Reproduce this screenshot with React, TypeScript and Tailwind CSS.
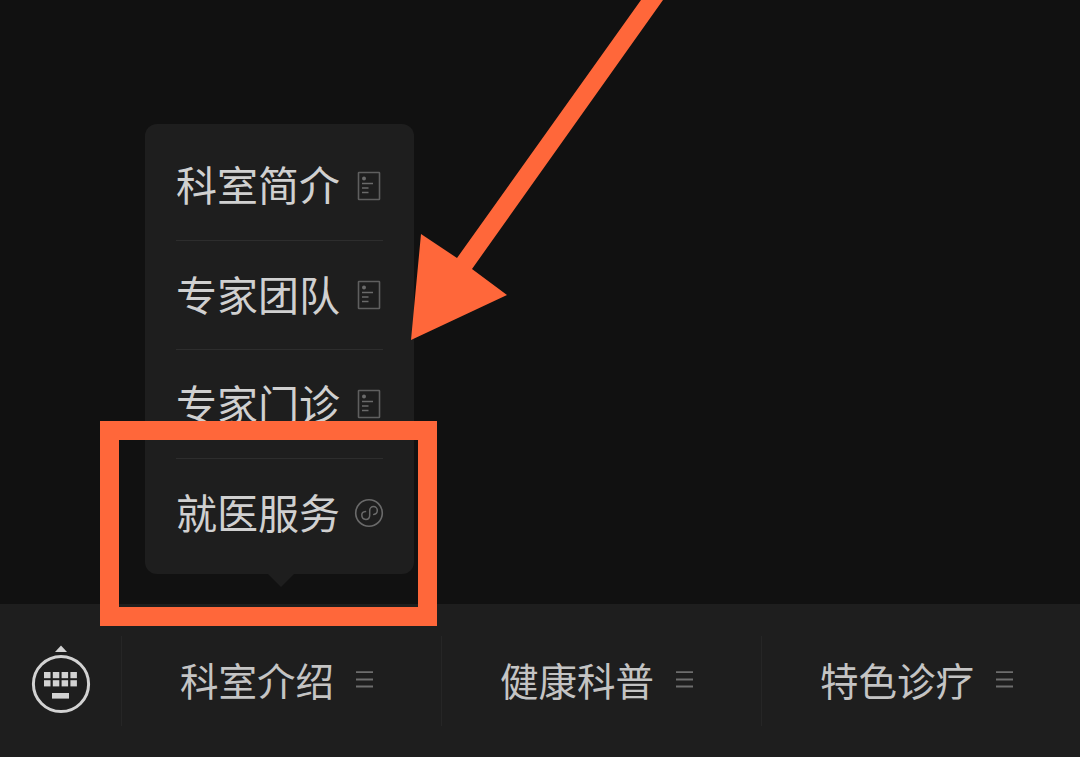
import React from "react";

const FONT = '"Noto Sans CJK SC", "Noto Sans", sans-serif';

function ArticleIcon() {
  return (
    <svg width="24" height="30" viewBox="0 0 24 30" fill="none" className="shrink-0">
      <rect x="1.5" y="1.5" width="21" height="27" stroke="#5f5f5f" strokeWidth="1.6" rx="0.5" />
      <circle cx="7" cy="7.5" r="2" fill="#6a6a6a" />
      <path d="M5 12.5H16M5 17H11.5M5 21.5H11.5" stroke="#6a6a6a" strokeWidth="1.5" />
    </svg>
  );
}

function MiniProgramIcon() {
  return (
    <svg width="30" height="30" viewBox="0 0 30 30" fill="none" className="shrink-0">
      <circle cx="15" cy="15" r="13.3" stroke="#6a6a6a" strokeWidth="1.6" />
      <path
        d="M7.8 16.8c0 3 1.9 4.6 4 4.6 2.4 0 3.9-1.9 3.9-4.2v-4.6c0-2.2 1.6-4 3.8-4 2.1 0 3.8 1.7 3.8 3.9 0 2.2-1.6 3.7-3.6 3.9M11.5 13.6c-2 .2-3.7 1.5-3.7 3.2"
        stroke="#6a6a6a"
        strokeWidth="1.5"
        strokeLinecap="round"
      />
    </svg>
  );
}

function KeyboardIcon() {
  const keys = [0, 1, 2, 3];
  return (
    <svg width="62" height="70" viewBox="0 0 62 70" fill="none">
      <path d="M25 7L31 0.5L37 7Z" fill="#d2d2d2" />
      <circle cx="31" cy="39" r="27.6" stroke="#d2d2d2" strokeWidth="3" />
      {keys.map((k) => (
        <rect key={`a${k}`} x={14 + k * 8.8} y="27" width="6.5" height="6.2" fill="#d2d2d2" />
      ))}
      {keys.map((k) => (
        <rect key={`b${k}`} x={14 + k * 8.8} y="35.2" width="6.5" height="6.2" fill="#d2d2d2" />
      ))}
      <rect x="22" y="48" width="17" height="5.6" fill="#d2d2d2" />
    </svg>
  );
}

function MenuLines() {
  return (
    <svg width="17" height="17" viewBox="0 0 17 17" className="shrink-0">
      <path d="M0 1.2H17M0 8.5H17M0 15.5H17" stroke="#6d6d6d" strokeWidth="1.8" />
    </svg>
  );
}

const items = [
  { label: "科室简介", mini: false },
  { label: "专家团队", mini: false },
  { label: "专家门诊", mini: false },
  { label: "就医服务", mini: true },
];

const tabs = ["科室介绍", "健康科普", "特色诊疗"];

export default function App() {
  return (
    <div
      className="relative flex h-[757px] w-[1080px] flex-col overflow-hidden bg-[#111111]"
      style={{ fontFamily: FONT }}
    >
      <main className="flex flex-1 items-end pb-[30px] pl-[145px]">
        <div className="relative w-[269px] rounded-[12px] bg-[#1e1e1e] px-[31px] py-[7px]">
          {items.map((item, i) => (
            <div
              key={item.label}
              className={`flex h-[109px] items-center justify-between ${i > 0 ? "border-t border-[#2d2d2d]" : ""}`}
            >
              <span className="pb-[4px] text-[41px] leading-none whitespace-nowrap text-[#d0d0d0]">{item.label}</span>
              <span className={item.mini ? "-mr-[1px] flex" : "mr-[2px] flex"}>
                {item.mini ? <MiniProgramIcon /> : <ArticleIcon />}
              </span>
            </div>
          ))}
          <div className="absolute top-full left-[123px] h-0 w-0 border-x-[13px] border-t-[13px] border-x-transparent border-t-[#1e1e1e]" />
        </div>
      </main>

      <footer className="flex h-[153px] shrink-0 bg-[#1e1e1e]">
        <div className="flex w-[121px] shrink-0 items-center justify-center pb-[1px] pl-[1px]">
          <KeyboardIcon />
        </div>
        {tabs.map((tab) => (
          <div key={tab} className="flex w-[320px] shrink-0 items-center">
            <div className="mt-[32px] h-[90px] w-px shrink-0 self-start bg-[#262626]" />
            <div className="flex flex-1 items-center pb-[2px] pl-[58px]">
              <span className="text-[38.5px] leading-none whitespace-nowrap text-[#c4c4c4]">{tab}</span>
              <span className="ml-[22px] flex">
                <MenuLines />
              </span>
            </div>
          </div>
        ))}
      </footer>

      {/* annotation overlay */}
      <div className="absolute top-[421px] left-[100px] h-[205px] w-[337px] border-[19px] border-[#ff673a]" />
      <svg className="absolute inset-0" width="1080" height="757" viewBox="0 0 1080 757">
        <polygon
          points="641,0 663,0 472,269 507,295 411,340 421,234 457,258"
          fill="#ff673a"
        />
      </svg>
    </div>
  );
}
